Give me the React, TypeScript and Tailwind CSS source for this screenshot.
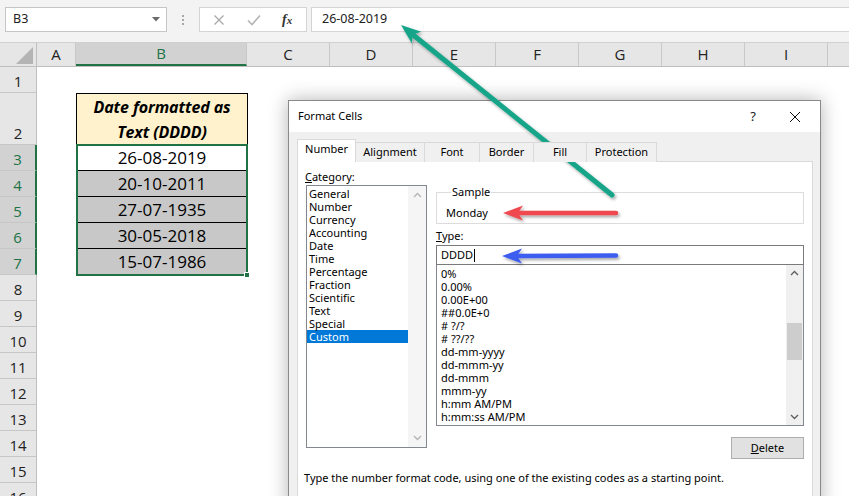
import React from 'react';

const columns = [
  { label: 'A', w: 'w-[39px]' },
  { label: 'B', w: 'w-[171px]', sel: true },
  { label: 'C', w: 'w-[83px]' },
  { label: 'D', w: 'w-[83px]' },
  { label: 'E', w: 'w-[83px]' },
  { label: 'F', w: 'w-[83px]' },
  { label: 'G', w: 'w-[83px]' },
  { label: 'H', w: 'w-[83px]' },
  { label: 'I', w: 'w-[83px]' },
];

const dates = ['26-08-2019', '20-10-2011', '27-07-1935', '30-05-2018', '15-07-1986'];

const categories = ['General', 'Number', 'Currency', 'Accounting', 'Date', 'Time', 'Percentage', 'Fraction', 'Scientific', 'Text', 'Special', 'Custom'];

const formats = ['0%', '0.00%', '0.00E+00', '##0.0E+0', '# ?/?', '# ??/??', 'dd-mm-yyyy', 'dd-mmm-yy', 'dd-mmm', 'mmm-yy', 'h:mm AM/PM', 'h:mm:ss AM/PM'];

const tabs = [
  { label: 'Number', w: 'w-[59px]', active: true },
  { label: 'Alignment', w: 'w-[69px]' },
  { label: 'Font', w: 'w-[55px]' },
  { label: 'Border', w: 'w-[54px]' },
  { label: 'Fill', w: 'w-[53px]' },
  { label: 'Protection', w: 'w-[70px]' },
];

function RowHeader({ n, sel, tall }: { n: number; sel?: boolean; tall?: boolean }) {
  return (
    <div
      className={`w-[37px] shrink-0 flex items-end justify-center pb-[1px] leading-[20px] text-[15px] border-b border-[#c6c6c6] ${tall ? 'h-[52px]' : 'h-[26px]'} ${sel ? 'bg-[#d2d2d2] text-[#217346] border-r-2 border-r-[#217346]' : 'bg-[#e6e6e6] text-[#222] border-r border-r-[#bfbfbf]'}`}
    >
      {n}
    </div>
  );
}

function UpChevron({ color }: { color: string }) {
  return (
    <svg width="9" height="6" viewBox="0 0 9 6">
      <path d="M1 5 L4.5 1.5 L8 5" fill="none" stroke={color} strokeWidth="1.4" />
    </svg>
  );
}

function DownChevron({ color }: { color: string }) {
  return (
    <svg width="9" height="6" viewBox="0 0 9 6">
      <path d="M1 1 L4.5 4.5 L8 1" fill="none" stroke={color} strokeWidth="1.4" />
    </svg>
  );
}

function FormatCellsDialog() {
  return (
    <div className="absolute left-[288px] top-[100px] w-[533px] h-[410px] bg-[#f0f0f0] border border-[#8a8a8a] shadow-[0_0_18px_rgba(0,0,0,0.3)] font-['Noto_Sans',sans-serif] text-[11px] text-black">
      {/* title bar */}
      <div className="h-[31px] bg-white flex items-center pl-[9px]">
        <span className="text-[11px]">Format Cells</span>
        <span className="ml-auto text-[13px] text-[#222] mr-[33px]">?</span>
        <svg width="12" height="12" viewBox="0 0 12 12" className="mr-[19px]">
          <path d="M1 1 L11 11 M11 1 L1 11" stroke="#111" strokeWidth="1" />
        </svg>
      </div>

      <div className="pl-[8px] pt-[7px]">
        {/* tabs */}
        <div className="flex items-end h-[23px] relative z-10 -mb-px">
          {tabs.map(t =>
            t.active ? (
              <div key={t.label} className={`${t.w} h-[23px] bg-white border border-[#d9d9d9] border-b-0 flex items-center justify-center pb-[3px]`}>
                {t.label}
              </div>
            ) : (
              <div key={t.label} className={`${t.w} h-[20px] bg-[#f0f0f0] border border-[#d9d9d9] border-l-0 border-b-0 flex items-center justify-center`}>
                {t.label}
              </div>
            )
          )}
        </div>

        {/* panel */}
        <div className="w-[516px] h-[360px] bg-white border border-[#d9d9d9]">
          <div className="flex items-start">
            {/* category */}
            <div className="ml-[8px] pt-[7px] w-[121px]">
              <div className="leading-[16px] -ml-px"><span className="underline">C</span>ategory:</div>
              <div className="h-[263px] border border-[#828790] bg-white flex">
                <div className="flex-1 pt-[1px]">
                  {categories.map(c => (
                    <div key={c} className={`h-[13px] leading-[13px] pl-[2px] ${c === 'Custom' ? 'bg-[#0078d7] text-white' : ''}`}>{c}</div>
                  ))}
                </div>
                <div className="w-[18px] bg-[#f5f5f5] flex flex-col items-center justify-between py-[6px]">
                  <UpChevron color="#b5b5b5" />
                  <DownChevron color="#b5b5b5" />
                </div>
              </div>
            </div>

            {/* type side */}
            <div className="ml-[9px] pt-[23px] w-[368px]">
              <fieldset className="h-[39px] border border-[#dcdcdc] px-[9px]">
                <legend className="ml-[5px] px-[1px] leading-[14px]">Sample</legend>
                <div className="mt-[7px] leading-[14px]">Monday</div>
              </fieldset>
              <div className="mt-[5px] leading-[14px]"><span className="underline">T</span>ype:</div>
              <div className="mt-[2px] h-[20px] border border-[#7a7a7a] flex items-center pl-[4px]">
                DDDD<span className="inline-block w-px h-[13px] bg-black ml-[1px]" />
              </div>
              <div className="h-[161px] border border-t-0 border-[#828790] flex">
                <div className="flex-1 pt-[2px] pl-[4px]">
                  {formats.map(f => (
                    <div key={f} className="h-[13px] leading-[13px]">{f}</div>
                  ))}
                </div>
                <div className="w-[17px] bg-[#f0f0f0] flex flex-col items-center py-[5px]">
                  <UpChevron color="#606060" />
                  <div className="mt-[47px] w-[15px] h-[37px] bg-[#cdcdcd]" />
                  <div className="mt-auto"><DownChevron color="#606060" /></div>
                </div>
              </div>
              <div className="flex justify-end mt-[11px]">
                <button className="w-[73px] h-[22px] bg-[#e1e1e1] border border-[#adadad] flex items-center justify-center">
                  <span><span className="underline">D</span>elete</span>
                </button>
              </div>
            </div>
          </div>
          <div className="mt-[12px] pl-[6px] leading-[14px]">
            Type the number format code, using one of the existing codes as a starting point.
          </div>
        </div>
      </div>
    </div>
  );
}

function Arrows() {
  return (
    <svg className="absolute inset-0 pointer-events-none" width="849" height="496" viewBox="0 0 849 496">
      <defs>
        <filter id="sh" x="-20%" y="-20%" width="140%" height="140%">
          <feDropShadow dx="1.5" dy="2" stdDeviation="1.5" floodColor="#000" floodOpacity="0.35" />
        </filter>
      </defs>
      <g filter="url(#sh)">
        <line x1="412" y1="34" x2="612" y2="195" stroke="#17a589" strokeWidth="5" strokeLinecap="round" />
        <path d="M401 25 L421.3 31.7 L412.7 34.4 L411.9 43.4 Z" fill="#17a589" />
      </g>
      <g filter="url(#sh)">
        <line x1="516" y1="213" x2="616" y2="213" stroke="#ef4a50" strokeWidth="4.5" strokeLinecap="round" />
        <path d="M503 213 L523 205.5 L518 213 L523 220.5 Z" fill="#ef4a50" />
      </g>
      <g filter="url(#sh)">
        <line x1="515" y1="256" x2="616" y2="255.5" stroke="#3d5cf0" strokeWidth="4.5" strokeLinecap="round" />
        <path d="M502 256 L522 248.5 L517 256 L522 263.5 Z" fill="#3d5cf0" />
      </g>
    </svg>
  );
}

export default function App() {
  return (
    <div className="relative w-[849px] h-[496px] overflow-hidden bg-white font-['Open_Sans',sans-serif] text-black">
      {/* formula bar */}
      <div className="h-[43px] bg-[#f3f3f3] border-b border-[#d0d0d0] flex items-start pt-[7px] font-['Noto_Sans',sans-serif] text-[12.5px]">
        <div className="ml-[5px] w-[162px] h-[25px] bg-white border border-[#c6c6c6] flex items-center pl-[7px] pr-[6px]">
          <span className="text-[#222]">B3</span>
          <svg width="8" height="5" viewBox="0 0 8 5" className="ml-auto">
            <path d="M0 0 H8 L4 4.5 Z" fill="#6b6b6b" />
          </svg>
        </div>
        <div className="w-[32px] h-[25px] flex flex-col items-center justify-center gap-[2px]">
          <span className="w-[2px] h-[2px] bg-[#a8a8a8]" />
          <span className="w-[2px] h-[2px] bg-[#a8a8a8]" />
          <span className="w-[2px] h-[2px] bg-[#a8a8a8]" />
        </div>
        <div className="w-[108px] h-[25px] bg-white border border-[#d4d4d4] flex items-center">
          <svg width="12" height="12" viewBox="0 0 12 12" className="ml-[13px]">
            <path d="M1.5 1.5 L10.5 10.5 M10.5 1.5 L1.5 10.5" stroke="#a9a9a9" strokeWidth="1.3" />
          </svg>
          <svg width="14" height="12" viewBox="0 0 14 12" className="ml-[22px]">
            <path d="M1 6.5 L5 10.5 L13 1.5" fill="none" stroke="#b5b5b5" strokeWidth="1.6" />
          </svg>
          <span className="ml-[21px] font-['Liberation_Serif',serif] italic text-[14px] text-[#333] font-semibold leading-none">
            f<span className="text-[11px]">x</span>
          </span>
        </div>
        <div className="ml-[4px] flex-1 h-[25px] bg-white border border-[#d4d4d4] border-r-0 flex items-center pl-[10px] text-[#222]">
          26-08-2019
        </div>
      </div>

      {/* column headers */}
      <div className="flex h-[24px] bg-[#e6e6e6] border-b border-[#bfbfbf] text-[15px]">
        <div className="w-[37px] shrink-0 border-r border-[#bfbfbf] flex items-end justify-end pr-[3px] pb-[2px]">
          <svg width="17" height="17" viewBox="0 0 17 17">
            <path d="M17 0 V17 H0 Z" fill="#b4b4b4" />
          </svg>
        </div>
        {columns.map(c => (
          <div
            key={c.label}
            className={`${c.w} shrink-0 flex items-center justify-center border-r border-[#c8c8c8] ${c.sel ? 'bg-[#d2d2d2] text-[#217346] border-b-2 border-b-[#217346]' : 'text-[#222]'}`}
          >
            {c.label}
          </div>
        ))}
        <div className="flex-1" />
      </div>

      {/* row 1 */}
      <div className="flex">
        <RowHeader n={1} />
      </div>

      {/* row 2 */}
      <div className="flex">
        <RowHeader n={2} tall />
        <div className="w-[39px] shrink-0" />
        <div className="w-[172px] h-[53px] -mb-px shrink-0 bg-[#fff2cc] border border-black flex flex-col items-center pt-[1px] text-[16px] font-bold italic leading-[25px] tracking-[-0.1px]">
          <span>Date formatted as</span>
          <span>Text (DDDD)</span>
        </div>
      </div>

      {/* rows 3-7 */}
      {dates.map((d, i) => (
        <div key={d} className="flex">
          <RowHeader n={i + 3} sel />
          <div className="w-[39px] shrink-0" />
          <div className={`w-[172px] h-[26px] shrink-0 border-x border-b border-black flex items-center justify-center text-[17px] ${i === 0 ? 'bg-white' : 'bg-[#c8c8c8]'}`}>
            {d}
          </div>
        </div>
      ))}

      {/* rows 8-16 */}
      {[8, 9, 10, 11, 12, 13, 14, 15, 16].map(n => (
        <div key={n} className="flex">
          <RowHeader n={n} />
        </div>
      ))}

      {/* selection outline */}
      <div className="absolute left-[76px] top-[144px] w-[172px] h-[132px] border-2 border-[#217346]" />
      <div className="absolute left-[244px] top-[272px] w-[6px] h-[6px] bg-[#217346] border border-white" />

      <FormatCellsDialog />
      <Arrows />
    </div>
  );
}
